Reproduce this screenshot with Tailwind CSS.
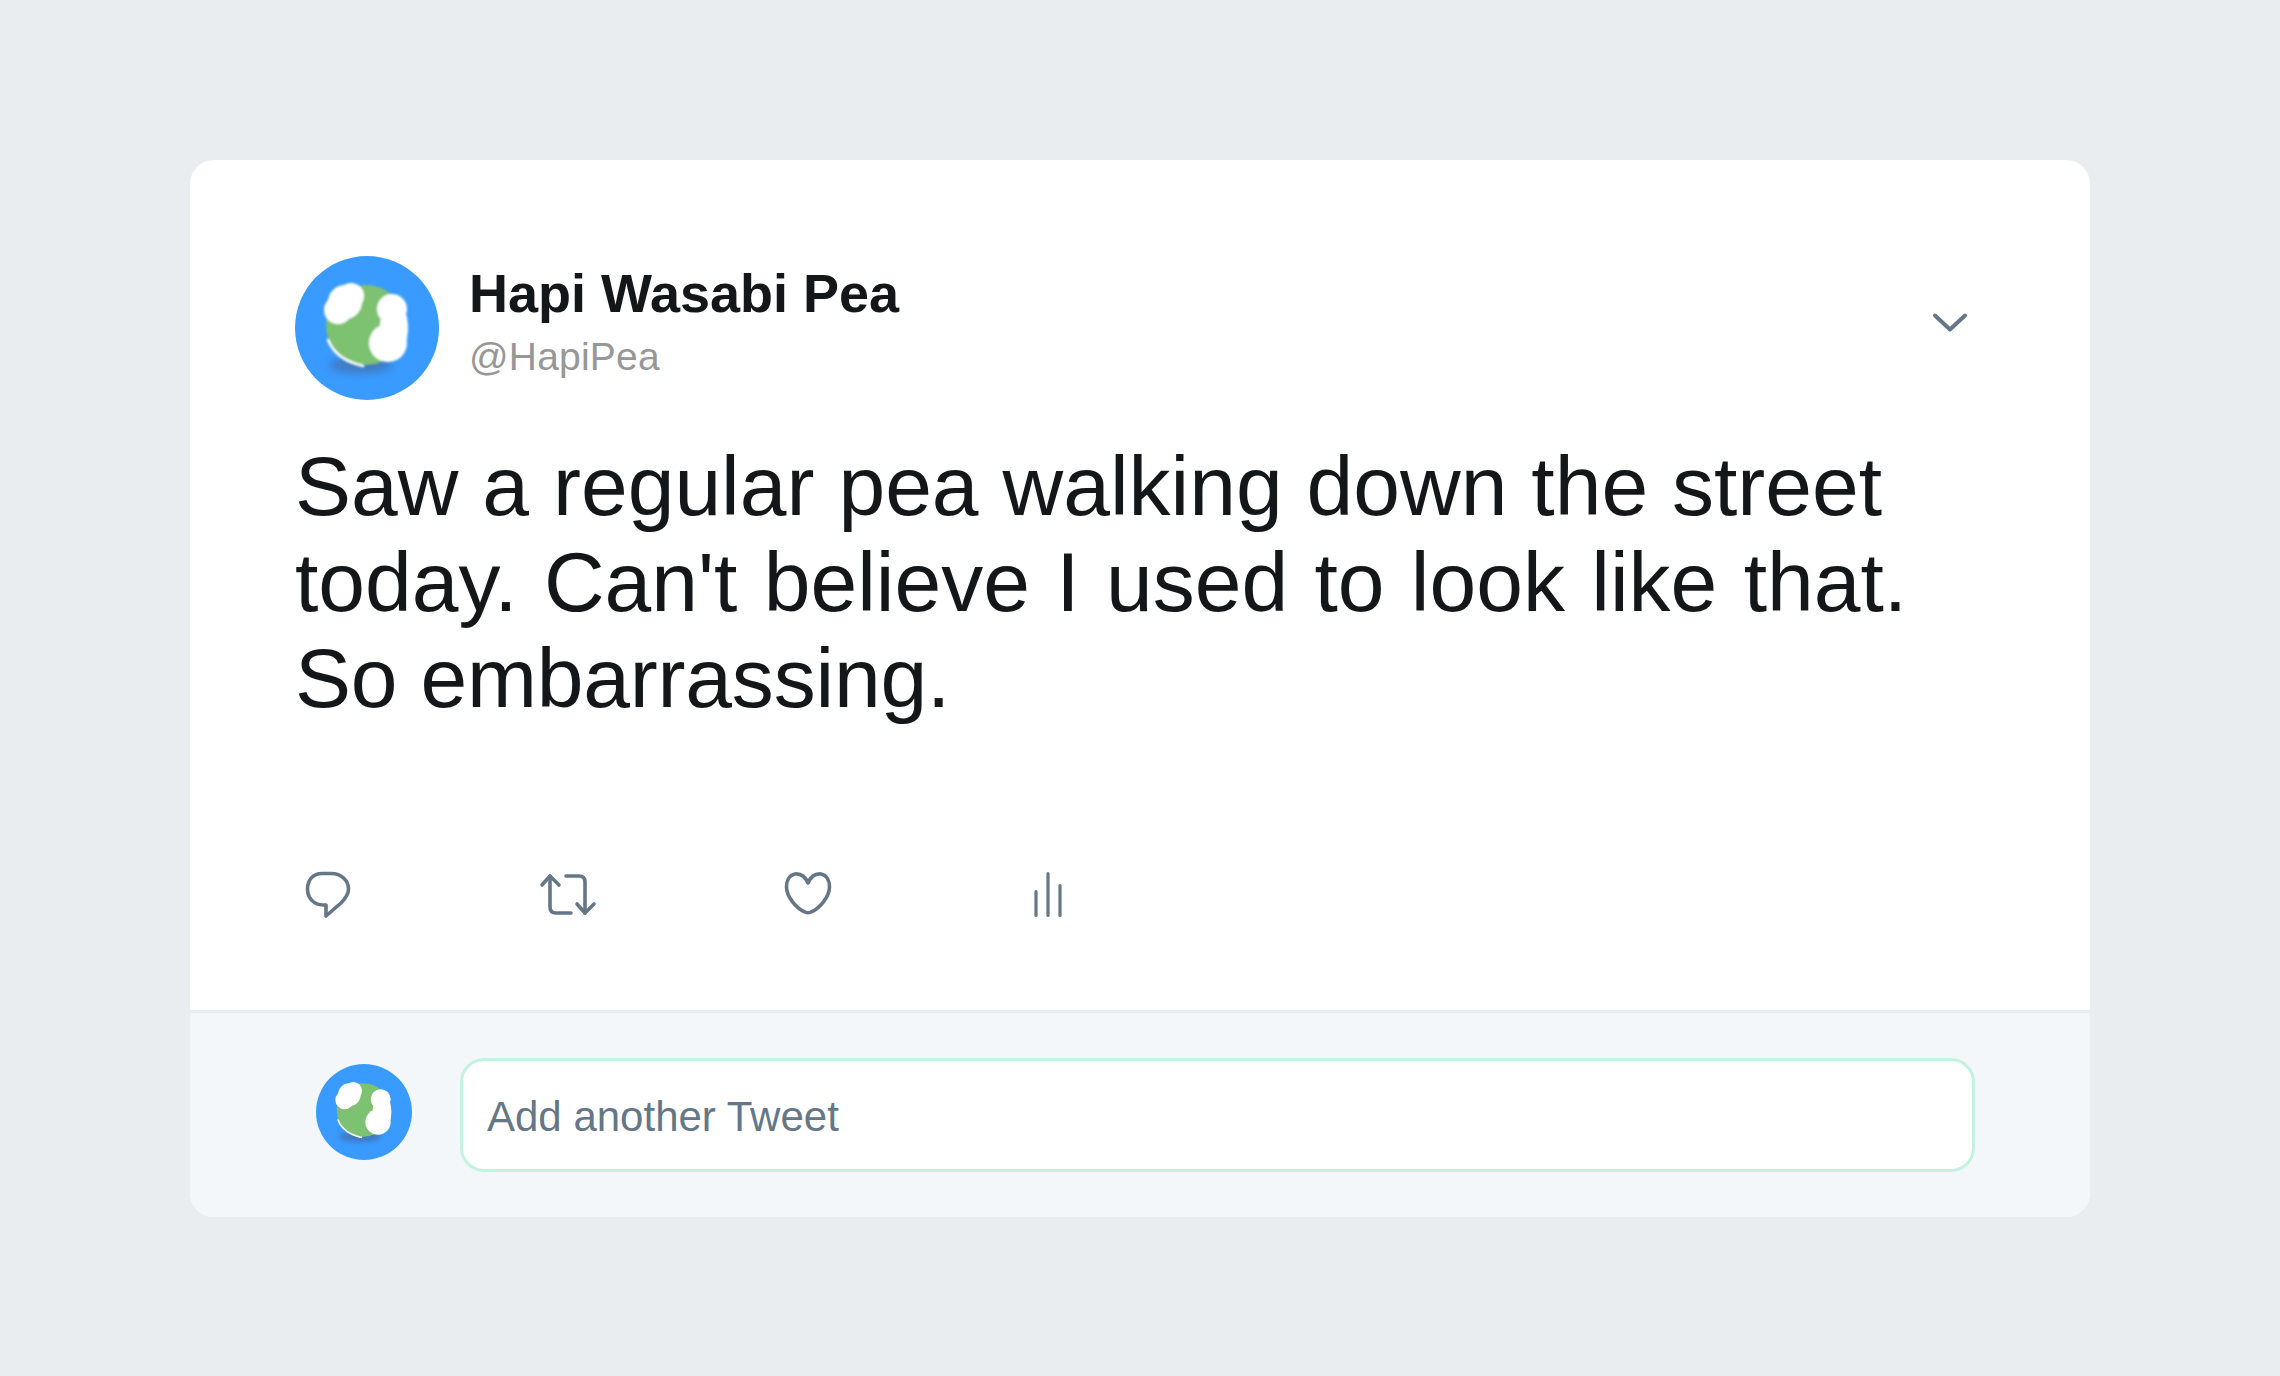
<!DOCTYPE html>
<html>
<head>
<meta charset="utf-8">
<script src="https://cdn.jsdelivr.net/npm/@tailwindcss/browser@4"></script>
</head>
<body class="m-0 h-[1376px] w-[2280px] overflow-hidden bg-[#e9edf0] font-['Liberation_Sans',Arial,sans-serif]">
<div class="pl-[190px] pt-[160px]">
  <div class="w-[1900px] overflow-hidden rounded-[24px] bg-white">
    <div class="h-[853px] border-b-[3px] border-[#e9edf0] px-[105px] pt-[96px]">
      <div class="flex items-start">
        <svg class="h-[144px] w-[144px] shrink-0" viewBox="0 0 144 144">
          <defs>
            <filter id="b1" x="-30%" y="-50%" width="160%" height="200%"><feGaussianBlur stdDeviation="4"/></filter>
            <filter id="b2" x="-10%" y="-10%" width="120%" height="120%"><feGaussianBlur stdDeviation="1"/></filter>
          </defs>
          <circle cx="72" cy="72" r="72" fill="#399bff"/>
          <ellipse cx="66" cy="109" rx="32" ry="8" fill="#44689f" opacity=".65" filter="url(#b1)"/>
          <g filter="url(#b2)">
            <circle cx="71" cy="69" r="40" fill="#7bc26f"/>
            <path d="M33 84 Q41 104 68 110" fill="none" stroke="#fff" stroke-width="2.5" stroke-linecap="round"/>
            <circle cx="43" cy="54" r="14" fill="#fff"/>
            <circle cx="50" cy="46" r="17" fill="#fff"/>
            <circle cx="56" cy="40" r="13" fill="#fff"/>
            <circle cx="97" cy="53" r="15" fill="#fff"/>
            <ellipse cx="99" cy="72" rx="14" ry="28" fill="#fff"/>
            <circle cx="93" cy="87" r="19" fill="#fff"/>
          </g>
        </svg>
        <div class="ml-[30px] flex-1 pt-[7px]">
          <div class="text-[54px] leading-[60px] font-bold text-[#14171a]">Hapi Wasabi Pea</div>
          <div class="mt-[11px] text-[39px] leading-[46px] tracking-[0.2px] text-[#979797]">@HapiPea</div>
        </div>
        <svg class="mt-[54px] mr-[16px] h-[24px] w-[38px]" viewBox="0 0 38 24" fill="none" stroke="#657786" stroke-width="4" stroke-linecap="round" stroke-linejoin="round"><path d="M4 5.500 L19 19.500 L34 5.500"/></svg>
      </div>
      <p class="mt-[38px] text-[84px] leading-[96px] text-[#14171a]"><span class="[word-spacing:0.6px]">Saw a regular pea walking down the street</span><br><span class="[word-spacing:3px]">today. Can't believe I used to look like that.</span><br><span class="tracking-[-0.2px]">So embarrassing.</span></p>
      <div class="mt-[135px] flex gap-[174px]">
        <svg class="h-[66px] w-[66px]" viewBox="0 0 66 66" fill="none" stroke="#657786" stroke-width="3.6" stroke-linecap="round" stroke-linejoin="round"><path d="M27 12.500 H36 C47 12.500 53.500 20 53.500 28 C53.500 34 50 38 46 42 L31 55 V44 H28 C19 44 12.500 37 12.500 28 C12.500 19 18 12.500 27 12.500 Z"/></svg>
        <svg class="h-[66px] w-[66px]" viewBox="0 0 66 66" fill="none" stroke="#657786" stroke-width="3.6" stroke-linecap="round" stroke-linejoin="round"><path d="M7 24 L15 15 L24 24"/><path d="M15 15 V46 Q15 52 21 52 H36"/><path d="M31 15 H44 Q50 15 50 21 V52"/><path d="M42 43 L50 52 L59 43"/></svg>
        <svg class="h-[66px] w-[66px]" viewBox="0 0 66 66" fill="none" stroke="#657786" stroke-width="3.6" stroke-linecap="round" stroke-linejoin="round"><path d="M33 22 C30 15 25 12.500 20 13 C14 14 11.500 20 11.500 26 C11.500 36 22 48 30 51 C32 52 34 52 36 51 C44 48 54.500 36 54.500 26 C54.500 20 52 14 46 13 C41 12.500 36 15 33 22 Z"/></svg>
        <svg class="h-[66px] w-[66px]" viewBox="0 0 66 66" fill="none" stroke="#657786" stroke-width="3.2" stroke-linecap="round"><path d="M21 30.500 V54.500 M33 12.500 V54.500 M45 24.500 V54.500"/></svg>
      </div>
    </div>
    <div class="flex h-[204px] items-start bg-[#f4f7fa] pt-[45px] pl-[126px]">
      <svg class="mt-[6px] h-[96px] w-[96px] shrink-0" viewBox="0 0 144 144">
        <circle cx="72" cy="72" r="72" fill="#399bff"/>
        <ellipse cx="66" cy="109" rx="32" ry="8" fill="#44689f" opacity=".65" filter="url(#b1)"/>
        <g filter="url(#b2)">
          <circle cx="71" cy="69" r="40" fill="#7bc26f"/>
          <path d="M33 84 Q41 104 68 110" fill="none" stroke="#fff" stroke-width="2.5" stroke-linecap="round"/>
          <circle cx="43" cy="54" r="14" fill="#fff"/>
          <circle cx="50" cy="46" r="17" fill="#fff"/>
          <circle cx="56" cy="40" r="13" fill="#fff"/>
          <circle cx="97" cy="53" r="15" fill="#fff"/>
          <ellipse cx="99" cy="72" rx="14" ry="28" fill="#fff"/>
          <circle cx="93" cy="87" r="19" fill="#fff"/>
        </g>
      </svg>
      <div class="ml-[48px] flex h-[114px] w-[1515px] items-center rounded-[24px] border-[3px] border-[#c4f2de] bg-white pt-[2px] pl-[24px] text-[42px] text-[#657786]">Add another Tweet</div>
    </div>
  </div>
</div>
</body>
</html>
